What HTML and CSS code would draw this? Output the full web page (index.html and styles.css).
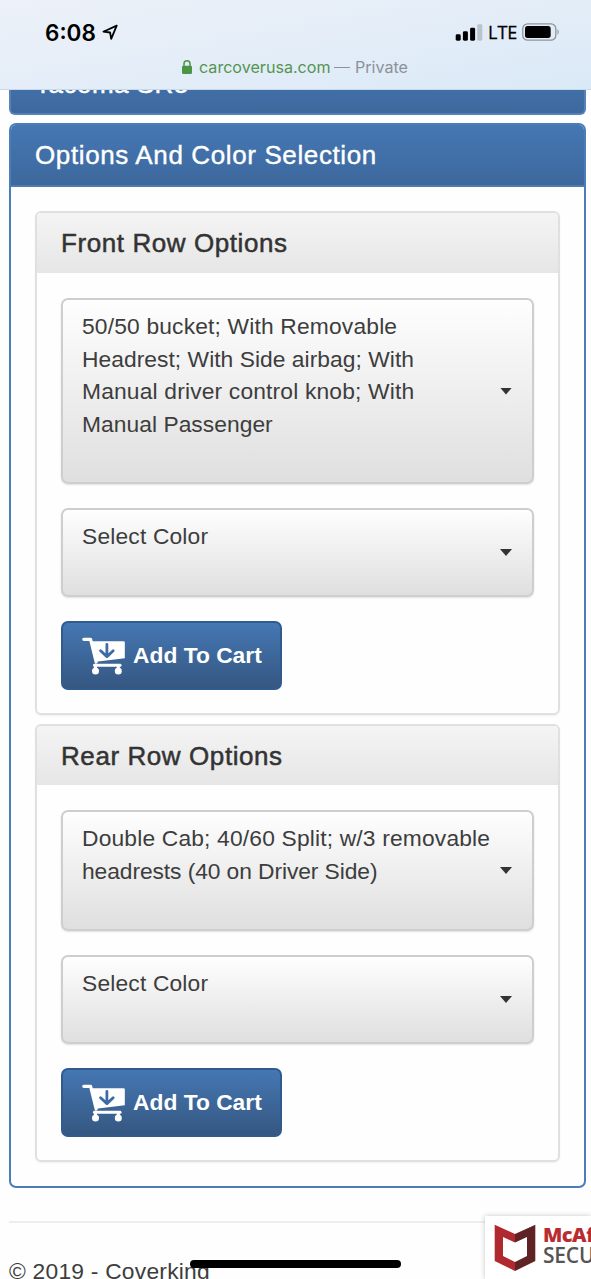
FILE: index.html
```html
<!DOCTYPE html>
<html lang="en">
<head>
<meta charset="utf-8">
<meta name="viewport" content="width=device-width, initial-scale=1">
<title>Options And Color Selection</title>
<link rel="stylesheet" href="styles.css">
</head>
<body>
<svg class="defs" width="0" height="0" aria-hidden="true">
  <symbol id="cart" viewBox="0 0 44 38">
    <path d="M1.8 2.3H8.6L14.2 25" fill="none" stroke="#fff" stroke-width="3.2" stroke-linecap="round" stroke-linejoin="round"/>
    <path d="M9.2 4.2H41.5Q42.8 4.2 42.8 5.5V21.2L14 24.8Z" fill="#fff"/>
    <path d="M13 26.8H38.5Q39.5 26.8 39.5 28.3T38.5 29.8H12Q11 29.8 11 28.3T12 26.8Z" fill="#fff"/>
    <circle cx="13.5" cy="34" r="3.5" fill="#fff"/>
    <circle cx="36.3" cy="34" r="3.5" fill="#fff"/>
    <path d="M12 29H15V34H12ZM34.8 29H37.8V34H34.8Z" fill="#fff"/>
    <path d="M24.9 7.4V19M18.6 13.8L24.9 19.6L31.2 13.8" fill="none" stroke="#3d6ba5" stroke-width="2.8" stroke-linecap="round" stroke-linejoin="round"/>
  </symbol>
</svg>
<header class="browser">
  <div class="status">
    <span class="time">6:08</span>
    <svg class="arrow" width="17" height="17" viewBox="0 0 17 17"><path d="M14.7 1.6L1.4 7.7L8.1 8.5L9.2 14.8Z" fill="none" stroke="#000" stroke-width="1.8" stroke-linejoin="round"/></svg>
    <svg class="signal" width="28" height="18" viewBox="0 0 28 18"><rect x="0.7" y="10.3" width="5" height="6.4" rx="1.4"/><rect x="7.9" y="7.3" width="5" height="9.4" rx="1.4"/><rect x="15.1" y="3.8" width="5" height="12.9" rx="1.4"/><rect x="22.3" y="0.2" width="5" height="16.5" rx="1.4" fill="#bac4cd"/></svg>
    <span class="lte">LTE</span>
    <svg class="battery" width="38" height="18" viewBox="0 0 38 18"><rect x="0.8" y="0.8" width="33" height="16.4" rx="4.8" fill="none" stroke="#8d959d" stroke-width="1.3"/><rect x="3" y="3" width="25.7" height="12" rx="2.7"/><path d="M35.5 6Q38 9 35.5 12Z" fill="#8d959d"/></svg>
  </div>
  <div class="address">
    <svg width="10" height="14" viewBox="0 0 10 14"><rect x="0" y="5.7" width="10" height="8.3" rx="1.3" fill="#4b9545"/><path d="M2 6.5V3.8Q2 .8 5 .8T8 3.8V6.5" fill="none" stroke="#4b9545" stroke-width="1.5"/></svg>
    <span class="domain">carcoverusa.com</span><span class="private"><span class="dash"></span>Private</span>
  </div>
</header>
<main class="page">
  <section class="vehicle"><h2>Tacoma SR5</h2></section>
  <section class="panel">
    <h2 class="panel-title"><span>Options And Color Selection</span></h2>
    <div class="panel-body">
      <section class="card front">
        <h3><span>Front Row Options</span></h3>
        <div class="card-body">
          <div class="select four"><p><span class="wide">50/50 bucket; With Removable</span><br>Headrest; With Side airbag; With<br><span class="wide">Manual driver control knob; With</span><br>Manual Passenger</p><i class="caret"></i></div>
          <div class="select one"><p><span class="wide">Select Color</span></p><i class="caret"></i></div>
          <button class="add"><svg width="44" height="38"><use href="#cart"/></svg><span>Add To Cart</span></button>
        </div>
      </section>
      <section class="card rear">
        <h3><span>Rear Row Options</span></h3>
        <div class="card-body">
          <div class="select two"><p><span class="wide">Double Cab; 40/60 Split; w/3 removable</span><br><span class="tight">headrests (40 on Driver Side)</span></p><i class="caret"></i></div>
          <div class="select one"><p><span class="wide">Select Color</span></p><i class="caret"></i></div>
          <button class="add"><svg width="44" height="38"><use href="#cart"/></svg><span>Add To Cart</span></button>
        </div>
      </section>
    </div>
  </section>
  <footer>© 2019 - Coverking</footer>
</main>
<aside class="badge">
  <svg width="42" height="48" viewBox="0 0 42 48"><path d="M0.7 0.7L21 10V47L0.7 37Z" fill="#b0292e"/><path d="M21 10L41.3 0.7V37L21 47Z" fill="#5f2225"/><path d="M9 13L21 18.5L33 13V32L21 38L9 32Z" fill="#fff"/></svg>
  <div class="badge-text"><b>McAfee</b><strong>SECURE</strong></div>
</aside>
<div class="home"></div>
</body>
</html>
```
FILE: styles.css
```css
* { box-sizing: border-box; }
html, body { height: 1279px; overflow: hidden; }
body { margin: 0; position: relative; background: #fefefe; color: #3d3d3d; font-family: "Liberation Sans", Arial, sans-serif; font-size: 22.8px; }
h2, h3, p { margin: 0; font-weight: 400; }
.defs { position: absolute; }
.browser { height: 90px; background: linear-gradient(170deg, #edf1f8, #e3edf8 55%, #dae9f7); border-bottom: 1px solid #c9d8e7; }
.status { display: flex; align-items: flex-start; height: 56px; padding: 23px 31px 0 45px; color: #000; }
.time { width: 51px; margin-right: 6px; font: 600 22.5px/20px Inter, sans-serif; white-space: nowrap; }
.arrow { margin-top: 1px; }
.signal { margin: 1px 5px 0 auto; }
.lte { width: 29px; margin-right: 5px; font: 400 18px/19px "Open Sans", sans-serif; -webkit-text-stroke: .3px #000; white-space: nowrap; }
.address { display: flex; align-items: center; justify-content: flex-start; padding-left: 182px; height: 22px; color: #8d9199; font: 400 16.1px/22px Inter, sans-serif; }
.domain { width: 131px; margin: 0 4px 0 7px; color: #559451; white-space: nowrap; }
.private { display: flex; align-items: center; gap: 5px; }
.dash { width: 16px; height: 1px; background: #8d9199; }
.page { padding: 0 5px 0 9px; }
.vehicle { height: 25px; overflow: hidden; border: 2px solid #5482b9; border-top: 0; border-radius: 0 0 6px 6px; background: linear-gradient(#416ea6, #3d699d); color: #fff; }
.vehicle h2 { padding-left: 24px; margin-top: -22px; font-size: 26px; line-height: 32px; letter-spacing: .5px; -webkit-text-stroke: .5px #fff; }
.panel { height: 1065px; margin-top: 8px; border: 2px solid #4b7db8; border-radius: 7px; overflow: hidden; }
.panel-title { height: 62px; padding-left: 24px; border-bottom: 2px solid #4d7aaf; background: linear-gradient(#4577b3, #3d689d); color: #fff; font-size: 26px; line-height: 60px; letter-spacing: .62px; -webkit-text-stroke: .4px #fff; }
.panel-body { display: flex; flex-direction: column; gap: 9px; padding: 24px 24px; }
.card { border: 2px solid #e0e0e0; border-radius: 6px; box-shadow: 0 1px 2px rgba(0,0,0,.06); }
.front { height: 504px; }
.rear { height: 438px; }
.card h3 { height: 60px; padding-left: 24px; border-radius: 4px 4px 0 0; background: linear-gradient(#f4f4f4, #e6e6e6); color: #333; font-size: 26px; line-height: 60px; letter-spacing: .58px; -webkit-text-stroke: .5px #333; }
.rear h3 { height: 59px; }
.card-body { display: flex; flex-direction: column; align-items: flex-start; padding: 25px 24px; }
.select { display: flex; align-items: center; justify-content: space-between; width: 473px; margin-bottom: 24px; padding: 0 20px 0 19px; border: 2px solid #cecece; border-radius: 7px; background: linear-gradient(#fefefe, #dfdfdf); box-shadow: 0 1px 2px rgba(0,0,0,.12); }
.select p { align-self: flex-start; padding-top: 10px; line-height: 32.7px; white-space: nowrap; letter-spacing: .04px; }
.select .wide { letter-spacing: .17px; }
.select .tight { letter-spacing: -.08px; }
.four { height: 186px; }
.two { height: 121px; }
.one { height: 89px; }
.caret { width: 12px; height: 7px; margin-left: -20px; background: #333; clip-path: polygon(0 0, 100% 0, 50% 100%); }
.add { display: flex; align-items: center; width: 221px; height: 69px; padding: 0 0 0 19px; border: 2px solid #315b8e; border-radius: 7px; background: linear-gradient(#4577b3, #355781); color: #fff; font: 700 22.8px/30px "Liberation Sans", Arial, sans-serif; white-space: nowrap; }
.add svg { margin-right: 7px; }
.add span { margin-top: -2px; }
footer { margin: 33px 0 0; border-top: 2px solid #eee; padding-top: 33px; line-height: 30px; letter-spacing: .23px; }
.badge { position: absolute; left: 485px; top: 1216px; width: 106px; height: 63px; display: flex; gap: 7px; padding: 8px 0 0 9px; overflow: hidden; background: #fff; box-shadow: 0 0 5px rgba(0,0,0,.22); }
.badge svg { flex: none; }
.badge-text { display: flex; flex-direction: column; font-family: "Open Sans", sans-serif; line-height: 21px; }
.badge-text b { color: #b72d32; font-size: 20px; font-weight: 800; letter-spacing: -.5px; }
.badge-text strong { color: #555; font-size: 21px; font-weight: 600; letter-spacing: -.2px; }
.home { position: absolute; left: 190px; top: 1260px; width: 211px; height: 8px; border-radius: 4px; background: #000; }
```
